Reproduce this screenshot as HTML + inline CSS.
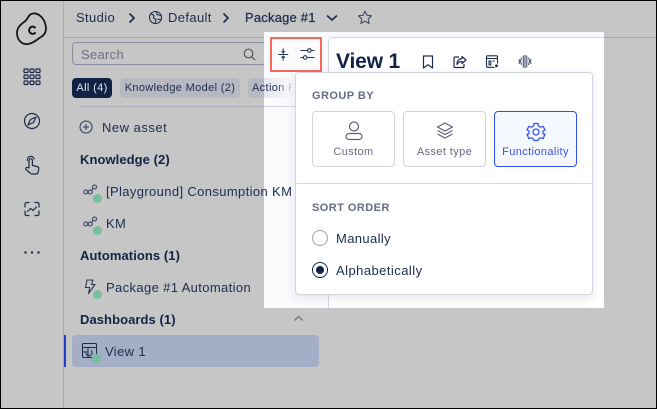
<!DOCTYPE html>
<html><head><meta charset="utf-8"><style>
html,body{margin:0;padding:0}
body{width:657px;height:409px;overflow:hidden;position:relative;background:#c6c6c6;font-family:"Liberation Sans",sans-serif;color:#1a2a4a}
.a{position:absolute;white-space:nowrap}
svg{position:absolute;overflow:visible;fill:none}
.t{font-size:13px;color:#1d2c4c;letter-spacing:.37px}
.h{font-size:13px;font-weight:700;color:#142345;letter-spacing:.07px}
.d{position:absolute;width:9px;height:9px;margin:-.5px 0 0 -.5px;border-radius:50%;background:#78bfa0}
.chip{font-size:11px;line-height:20px;letter-spacing:.35px;color:#1d2c4c}
.card{position:absolute;top:111px;width:81px;height:54px;border:1px solid #d3d3e0;border-radius:4px;background:#fff;text-align:center;font-size:11px;color:#666a85;letter-spacing:.38px;box-sizing:content-box}
.card span{position:absolute;left:0;right:0;top:34px}
</style></head><body>
<!-- frame -->
<div class="a" style="left:63px;top:0;width:1px;height:409px;background:#a9a9ad"></div>
<div class="a" style="left:64px;top:37px;width:593px;height:1px;background:#a9a9ad"></div>

<!-- rail -->
<svg style="left:0;top:0" width="64" height="270" stroke="#141c2e" stroke-width="1.500" stroke-linecap="round" stroke-linejoin="round">
<path d="M33 13.500C38 13 43 17 45 23C47 29 46 34 41 37C36 40 34 43 28 44C22 45 17 40 17 33C17 28 20 25 24 22C28 20 28 14 33 13.500Z" stroke="#14161e" stroke-width="1.800"/>
<path d="M35 27.500A3.600 3.600 0 1 0 35 33" stroke="#14161e" stroke-width="2"/>
<g stroke-width="1.200" stroke="#1b2a4b"><rect x="24" y="69" width="4" height="3.500" rx=".8"/><rect x="30" y="69" width="4" height="3.500" rx=".8"/><rect x="36" y="69" width="4" height="3.500" rx=".8"/><rect x="24" y="75" width="4" height="3.500" rx=".8"/><rect x="30" y="75" width="4" height="3.500" rx=".8"/><rect x="36" y="75" width="4" height="3.500" rx=".8"/><rect x="24" y="81" width="4" height="3.500" rx=".8"/><rect x="30" y="81" width="4" height="3.500" rx=".8"/><rect x="36" y="81" width="4" height="3.500" rx=".8"/></g>
<g stroke="#1b2a4b" stroke-width="1.200"><circle cx="32" cy="121" r="7.500"/><path d="M36 117L33.500 122.500L28 125L30.500 119.500Z"/></g>
<g stroke="#1b2a4b" stroke-width="1.200"><path d="M29 167V160.500A1.700 1.700 0 0 1 32.400 160.500V165.500L37 166.500C38.500 167 39 168 38.800 169L38 172.500C37.800 173.500 37 174 36 174H32C31 174 30.500 173.500 30 173L26 169.500C25 168 27 166.500 29 168"/><path d="M27.500 160.500A3.300 3.300 0 0 1 34 159"/></g>
<g stroke="#1b2a4b" stroke-width="1.200"><path d="M25 207V204A1.500 1.500 0 0 1 26.500 202.500H29M35 202.500H37.500A1.500 1.500 0 0 1 39 204V207M39 211V214A1.500 1.500 0 0 1 37.500 215.500H35M29 215.500H26.500A1.500 1.500 0 0 1 25 214V211"/><path d="M27.500 211.500L30.500 208.500L33 210.500L36.500 207"/></g>
<g fill="#1b2a4b" stroke="none"><circle cx="25.500" cy="252.500" r="1.200"/><circle cx="32" cy="252.500" r="1.200"/><circle cx="38.500" cy="252.500" r="1.200"/></g>
</svg>

<!-- breadcrumb -->
<div class="a t" style="left:76px;top:10px">Studio</div>
<svg style="left:128px;top:12px" width="10" height="12" stroke="#1d2c4c" stroke-width="1.700"><path d="M1.500 1.500L6 6L1.500 10.500"/></svg>
<svg style="left:148px;top:10px" width="15" height="15" stroke="#1d2c4c" stroke-width="1.100"><circle cx="7.500" cy="7.500" r="6"/><path d="M3 3.500L6 5.500L5.500 8L8 9.500L7 13.500M8.500 1.500L9 4.500L13 5.500M9.500 9L13 10"/></svg>
<div class="a t" style="left:168px;top:10px">Default</div>
<svg style="left:222px;top:12px" width="10" height="12" stroke="#1d2c4c" stroke-width="1.700"><path d="M1.500 1.500L6 6L1.500 10.500"/></svg>
<div class="a t" style="left:245px;top:10px;letter-spacing:.2px;-webkit-text-stroke:.25px #1d2c4c">Package #1</div>
<svg style="left:326px;top:14px" width="12" height="8" stroke="#1d2c4c" stroke-width="1.600"><path d="M1 1.500L6 6L11 1.500"/></svg>
<svg style="left:358px;top:10px" width="15" height="15" stroke="#3c4866" stroke-width="1.100" stroke-linejoin="round"><path d="M7 1L9 5.300L13.500 5.800L10.200 8.900L11.100 13.500L7 11.200L2.900 13.500L3.800 8.900L.5 5.800L5 5.300Z"/></svg>

<!-- search -->
<div class="a" style="left:72px;top:42px;width:194px;height:23px;border:1px solid #8c8ca0;border-radius:4px;box-sizing:border-box"></div>
<div class="a" style="left:81px;top:47px;font-size:13px;color:#6b6e7c;letter-spacing:.3px">Search</div>
<svg style="left:243px;top:48px" width="13" height="13" stroke="#4d5360" stroke-width="1.200"><circle cx="5.500" cy="5.500" r="4.300"/><path d="M8.800 8.800L12 12"/></svg>

<!-- filters -->
<div class="a chip" style="left:72px;top:78px;width:40px;height:20px;background:#0f2145;border-radius:4px;color:#e4e6ec;text-align:center">All (4)</div>
<div class="a chip" style="left:120px;top:78px;width:120px;height:20px;background:#b8b8c3;border-radius:4px;text-align:center">Knowledge Model (2)</div>
<div class="a" style="left:80px;top:106px;width:184px;height:1px;background:#adadb6"></div>

<!-- tree -->
<svg style="left:79px;top:120px" width="15" height="15" stroke="#2b3957" stroke-width="1"><circle cx="7" cy="7" r="6"/><path d="M7 4V10M4 7H10"/></svg>
<div class="a t" style="left:102px;top:120px;letter-spacing:.5px">New asset</div>
<div class="a h" style="left:80px;top:152px">Knowledge (2)</div>
<svg style="left:83px;top:184px" width="15" height="14" stroke="#2b3957" stroke-width="1"><circle cx="2.800" cy="8" r="2"/><circle cx="7.200" cy="8" r="2"/><circle cx="11.500" cy="3" r="2"/><path d="M8.500 6.500L10 4.500"/></svg>
<div class="d" style="left:93px;top:194px"></div>
<svg style="left:83px;top:216px" width="15" height="14" stroke="#2b3957" stroke-width="1"><circle cx="2.800" cy="8" r="2"/><circle cx="7.200" cy="8" r="2"/><circle cx="11.500" cy="3" r="2"/><path d="M8.500 6.500L10 4.500"/></svg>
<div class="d" style="left:93px;top:226px"></div>
<div class="a t" style="left:106px;top:216px">KM</div>
<div class="a h" style="left:80px;top:248px">Automations (1)</div>
<svg style="left:84px;top:279px" width="14" height="16" stroke="#2b3957" stroke-width="1.100" stroke-linejoin="round"><path d="M3 1H9L7.500 5.500H11L4.500 14.500L5.800 8.500H1.500Z"/></svg>
<div class="d" style="left:93px;top:290px"></div>
<div class="a t" style="left:106px;top:280px">Package #1 Automation</div>
<div class="a h" style="left:80px;top:312px">Dashboards (1)</div>
<svg style="left:293px;top:315px" width="11" height="7" stroke="#6f7480" stroke-width="1.300"><path d="M1.500 5.500L5.500 1.500L9.500 5.500"/></svg>
<div class="a" style="left:64px;top:335px;width:2px;height:32px;background:#1f3fc8"></div>
<div class="a" style="left:72px;top:335px;width:247px;height:32px;background:#a4afc7;border-radius:4px"></div>
<svg style="left:82px;top:343px" width="16" height="16" stroke="#1d2c4c" stroke-width="1"><rect x=".5" y=".5" width="14" height="14" rx="1"/><path d="M.5 4.500H14.500M6 4.500V14.500M.5 9H6"/><path d="M9 7.500A3 3 0 1 1 4 10"/></svg>
<div class="d" style="left:92px;top:354px"></div>
<div class="a t" style="left:105px;top:344px">View 1</div>

<!-- spotlight -->
<div class="a" style="left:264px;top:32px;width:340px;height:276px;background:#fff;overflow:hidden">
  <div class="a" style="left:0;top:0;width:64px;height:276px;background:#fbfbfe"></div>
  <div class="a" style="left:64px;top:0;width:276px;height:5px;background:#f9f9fd"></div>
  <div class="a" style="left:64px;top:5px;width:290px;height:300px;background:#fff;border:1px solid #d5d5e2;border-radius:5px 0 0 0"></div>
</div>

<!-- sidebar content showing through the spotlight -->
<div class="a" style="left:248px;top:78px;width:16px;height:20px;background:#b8b8c3;border-radius:4px 0 0 4px"></div>
<div class="a" style="left:264px;top:78px;width:32px;height:20px;background:linear-gradient(to right,#e6e6ef,#fbfbfe)"></div>
<div class="a chip" style="left:252px;top:78px;width:44px;height:20px;overflow:hidden;-webkit-mask-image:linear-gradient(to right,#000 55%,transparent 95%);mask-image:linear-gradient(to right,#000 55%,transparent 95%)">Action Flows</div>
<div class="a" style="left:264px;top:106px;width:32px;height:1px;background:#d5d5e2"></div>
<div class="a t" style="left:106px;top:184px">[Playground] Consumption KM</div>

<div class="a" style="left:270px;top:37px;width:52px;height:35px;border:2px solid #f4695c;box-sizing:border-box"></div>
<svg style="left:278px;top:48px" width="11" height="13" stroke="#27365a" stroke-width="1.100"><path d="M.2 6.500H10.200M5.200 .5V4.700M3.600 3.300L5.200 5L6.800 3.300M5.200 12.500V8.300M3.600 9.700L5.200 8L6.800 9.700"/></svg>
<svg style="left:300px;top:47.500px" width="15" height="12" stroke="#27365a" stroke-width="1.100"><path d="M.5 2.500H7.500M11 2.500H14.500M.5 9.500H3.500M7 9.500H14.500"/><circle cx="9.300" cy="2.500" r="1.800"/><circle cx="5.200" cy="9.500" r="1.800"/></svg>
<div class="a" style="left:336px;top:50px;font-size:21px;font-weight:700;color:#122247;letter-spacing:-.15px">View 1</div>
<svg style="left:422px;top:55px" width="12" height="14" stroke="#1d2c4c" stroke-width="1.200" stroke-linejoin="round"><path d="M1.500 1H10.500V13L6 9.800L1.500 13Z"/></svg>
<svg style="left:453px;top:55px" width="14" height="14" stroke="#1d2c4c" stroke-width="1.200" stroke-linejoin="round"><path d="M6 2H2A1 1 0 0 0 1 3V11.500A1 1 0 0 0 2 12.500H10A1 1 0 0 0 11 11.500V9"/><path d="M9 1.500L13 5L9 8.500V6.500C6.500 6.500 5 7.500 4 9.500C4 6 6 4 9 3.500Z"/></svg>
<svg style="left:486px;top:55px" width="15" height="15" stroke="#1d2c4c" stroke-width="1.100"><rect x=".5" y=".8" width="11" height="11.500" rx="1"/><path d="M.5 3.500H11.500M3 6H4.800V10H3ZM6.500 6H8.800"/><circle cx="10.500" cy="10.800" r="2" fill="#1d2c4c" stroke="#fff"/></svg>
<svg style="left:518px;top:54px" width="14" height="15" stroke="#3a4763" stroke-width="1"><path d="M7 1V14M5.300 1.500V13.500M8.800 1.500V13.500M3.500 3.500L2.500 7L3.500 11M10.500 3.500L11.500 7L10.500 11M1 5L1.500 7.500L1 10M13 5L12.500 7.500L13 10"/></svg>

<!-- popover -->
<div class="a" style="left:295px;top:72px;width:298px;height:223px;background:#fff;border:1px solid #d3d3e0;border-radius:4px;box-sizing:border-box;box-shadow:0 3px 10px rgba(60,60,110,.12)"></div>
<div class="a" style="left:312px;top:90px;font-size:11px;font-weight:700;color:#666a85;letter-spacing:.45px">GROUP BY</div>
<div class="card" style="left:312px"><span>Custom</span></div>
<div class="card" style="left:403px"><span>Asset type</span></div>
<div class="card" style="left:494px;border-color:#2c4ff0;background:#f5f9ff;color:#3a55e0"><span>Functionality</span></div>
<svg style="left:345px;top:121px" width="18" height="21" stroke="#5c607c" stroke-width="1.200"><circle cx="9" cy="5.500" r="4.500"/><path d="M4 12.500H14A2.800 2.800 0 0 1 14 18.500H4A2.800 2.800 0 0 1 4 12.500Z"/></svg>
<svg style="left:436px;top:122px" width="18" height="18" stroke="#5c607c" stroke-width="1.200" stroke-linejoin="round"><path d="M9 1L16.500 5L9 9L1.500 5Z"/><path d="M1.500 8.500L9 12.500L16.500 8.500M1.500 12L9 16L16.500 12"/></svg>
<svg style="left:526px;top:122px" width="20" height="20" stroke="#3a55e0" stroke-width="1.300" stroke-linejoin="round"><circle cx="10" cy="10" r="3"/><path d="M8 1.500H12L12.500 4L14.500 5.200L17 4.300L19 7.700L17 9.300V11.700L19 12.300L17 16.700L14.500 15.800L12.500 17L12 18.500H8L7.500 17L5.500 15.800L3 16.700L1 12.300L3 11.700V9.300L1 7.700L3 4.300L5.500 5.200L7.500 4Z"/></svg>
<div class="a" style="left:296px;top:183px;width:296px;height:1px;background:#d8d8e2"></div>
<div class="a" style="left:312px;top:202px;font-size:11px;font-weight:700;color:#666a85;letter-spacing:.45px">SORT ORDER</div>
<div class="a" style="left:312px;top:230px;width:16px;height:16px;border:1px solid #9d9db8;border-radius:50%;box-sizing:border-box"></div>
<div class="a t" style="left:336px;top:231px">Manually</div>
<div class="a" style="left:312px;top:262px;width:16px;height:16px;border:1px solid #122247;border-radius:50%;box-sizing:border-box"></div>
<div class="a" style="left:316px;top:266px;width:8px;height:8px;background:#122247;border-radius:50%"></div>
<div class="a t" style="left:336px;top:263px;letter-spacing:.45px">Alphabetically</div>

<!-- outer border -->
<div class="a" style="left:0;top:0;width:657px;height:409px;border:1px solid #000;box-sizing:border-box;pointer-events:none"></div>
</body></html>
